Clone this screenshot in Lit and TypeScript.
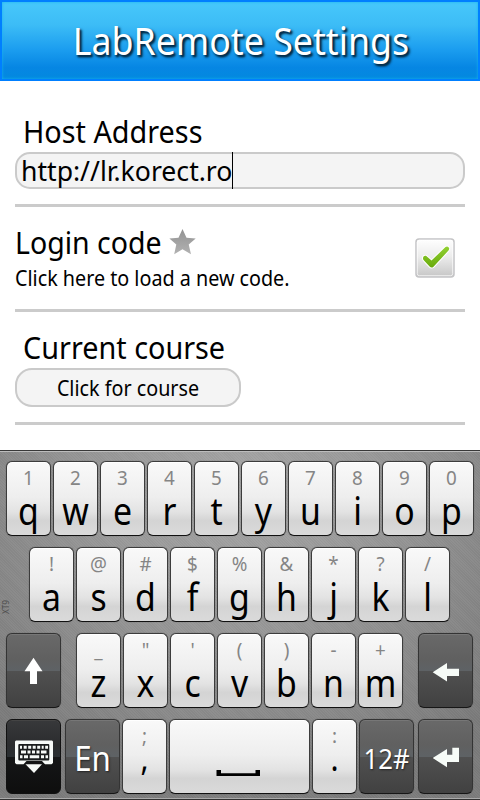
import { LitElement, html, css, svg, nothing } from "lit";
import { customElement, property } from "lit/decorators.js";

const icons: Record<string, unknown> = {
  shift: svg`<path fill="#fff" d="M27.5 24.7L36.5 38.3H31V51H24V38.3H18.5Z"/>`,
  del: svg`<path fill="#f7fcf8" d="M14.7 39.3L29 30V35.7H41V43H29V48.6Z"/>`,
  enter: svg`<path fill="#f7fcf8" d="M14.7 39L29 30V35.8H34.3V28.7H41V43H29V48.3Z"/>`,
  space: svg`<path fill="#000" d="M47.5 51H52V54.2H86.5V51H91V57H47.5Z"/>`,
  hide: svg`
    <path fill="#f7faf8" d="M10 21.5H46L47 22.5V44L45.5 45.3H39L36 42H20.5L17.5 45.3H10.5L9 44V22.5Z"/>
    <rect x="12.3" y="25" width="31" height="16.4" rx="1" fill="#1a1c1d"/>
    <path stroke="#f7faf8" stroke-width="3" d="M14 28.2h2M17.7 28.2h3M22.2 28.2h3M26.7 28.2h3M31.2 28.2h3M35.7 28.2h2M39.2 28.2h2.8M15 33h5M21.5 33h3M26 33h3M30.5 33h3M35 33h5.5M14 37.8h2.5M18 37.8h4M23.7 37.8h9.5M35 37.8h3M39.5 37.8h2.5"/>
    <path fill="#f7faf8" d="M19.5 45.3H36L28 54Z"/>`,
};

@customElement("key-cap")
export class KeyCap extends LitElement {
  @property() alt = "";
  @property() label = "";
  @property() icon = "";
  @property({ reflect: true }) kind = "light";

  static styles = css`
    :host {
      display: block; box-sizing: border-box; width: 45px; height: 75px; flex: none;
      border: 1px solid #3c3c3c; border-bottom-color: #111; border-radius: 6px;
      background: linear-gradient(#f9f9f9, #eeeeee 48%, #e3e3e3 68%, #d4d4d4 80%, #dadada);
      box-shadow: 0 0 1px rgba(0, 0, 0, 0.45), inset 0 1px 0 #fff;
      text-align: center; overflow: hidden;
    }
    :host([kind="dark"]), :host([kind="black"]) {
      width: 55px; border-color: #343434; border-bottom-color: #161616;
      background: linear-gradient(#696969, #606060 34%, #5e6265 50%, #505050 51%, #414141);
      box-shadow: 0 0 1px rgba(0, 0, 0, 0.4), inset 0 1px 0 #777;
    }
    :host([kind="black"]) {
      border-color: #111;
      background: linear-gradient(#38393b, #2b2c2e 34%, #2a2f32 50%, #151617 51%, #0e0e0e);
      box-shadow: inset 0 1px 0 #444;
    }
    :host([kind="space"]) { width: 141px; }
    .alt { font-size: 20px; line-height: 24px; height: 24px; margin-top: 4px; color: #858585; transform: scaleX(0.94); }
    .main { font-size: 38px; line-height: 44px; margin: -2px -6px 0; color: #000; transform: scaleX(0.89); }
    .point { font-size: 34px; margin-top: -12px; }
    .word { font-size: 34px; line-height: 76px; margin: 0 -6px; color: #fff; text-shadow: 1px 1px 2px #222; transform: scaleX(0.92); }
    .long { font-size: 28px; transform: scaleX(0.92); }
    svg { display: block; width: calc(100% + 2px); height: 75px; margin: -1px; }
  `;

  render() {
    if (this.icon) return html`<svg>${icons[this.icon]}</svg>`;
    if (this.kind === "dark")
      return html`<div class="word ${this.label.length > 2 ? "long" : ""}">${this.label}</div>`;
    const point = this.label === "," || this.label === ".";
    return html`${this.alt ? html`<div class="alt">${this.alt}</div>` : nothing}<div class="main ${point ? "point" : ""}">${this.label}</div>`;
  }
}

const letters = (main: string, alts: string) =>
  [...main].map((c, i) => html`<key-cap label=${c} alt=${alts[i]}></key-cap>`);

@customElement("app-root")
export class AppRoot extends LitElement {
  static styles = css`
    :host {
      display: flex; flex-direction: column; width: 480px; height: 800px; overflow: hidden;
      background: #fff; color: #000; font-family: "Noto Sans", "Open Sans", sans-serif; white-space: nowrap;
    }
    header {
      box-sizing: border-box; height: 81px; flex: none; border: 2px solid #007fff;
      background: linear-gradient(#47c8fb, #3cbcf6 30%, #1b9def 62%, #0686e3 85%, #0389df);
      box-shadow: inset 0 0 3px #18b5ee;
      text-align: center; color: #fff; font-size: 38px; line-height: 77px;
      text-shadow: 2px 2px 3px #022b48, 2px 2px 2px #063858;
    }
    .title { display: inline-block; transform: translateX(1px) scaleX(0.94); }
    section { box-sizing: border-box; flex: none; margin: 0 15px; border-bottom: 3px solid #cbcbcb; }
    .host { height: 126px; padding-top: 33px; }
    .login { height: 105px; padding-top: 18px; display: flex; justify-content: space-between; }
    .course { height: 113px; padding-top: 18px; }
    .label { height: 36px; font-size: 30px; line-height: 36px; display: flex; align-items: flex-start; }
    .indent { padding-left: 8px; }
    .fit { display: block; transform-origin: left; transform: scaleX(0.95); }
    .indent .fit { transform: scaleX(0.96); }
    .field {
      box-sizing: border-box; height: 37px; margin-top: 2px; padding-left: 4px;
      border: 2px solid #cacaca; border-radius: 15px; background: #f4f4f4;
      font-size: 27px; line-height: 34px; display: flex;
    }
    .url { width: 211px; }
    .url .fit { transform: scaleX(0.985); }
    .caret { width: 1px; height: 37px; margin-top: -2px; background: #000; }
    .sub { font-size: 21px; line-height: 24px; margin-top: 5px; }
    .sub .fit, .button .fit { transform: scaleX(0.94); }
    .star { width: 27px; height: 26px; margin: 4px 0 0 6px; }
    .name { width: 148px; }
    .check { width: 40px; height: 40px; margin: 13px 10px 0 0; }
    .button {
      box-sizing: border-box; width: 226px; height: 39px; margin-top: 2px;
      border: 2px solid #cacaca; border-radius: 17px; background: #f4f4f4;
      font-size: 21px; line-height: 36px; text-align: center;
    }
    .button .fit { transform-origin: center; }
    .board {
      flex: none; box-sizing: border-box; height: 350px; margin-top: 25px; padding: 10px 0 0 6px;
      border-top: 1px solid #383838; border-bottom: 1px solid #333;
      box-shadow: inset 0 1px 0 #bdbdbd, inset 0 -1px 0 #aaa;
      background:
        repeating-linear-gradient(45deg, rgba(255,255,255,0.025) 0 1px, rgba(0,0,0,0.025) 1px 2px),
        radial-gradient(ellipse 330px 330px at 50% 10%, #a5a5a5, #989898 45%, #7c7c7c);
      display: grid; grid-template-rows: repeat(4, 75px); row-gap: 11px;
    }
    .row { display: flex; gap: 2px; }
    .mode {
      width: 12px; height: 20px; margin: 50px 9px 0 -6px; flex: none;
      display: flex; justify-content: center; align-items: center;
      font-size: 9px; line-height: 12px; color: #4c4c4c;
    }
    .mode span { display: block; transform: rotate(-90deg) scaleX(0.92); }
    .letters { display: flex; gap: 2px; margin: 0 13px; }
    .gap { margin-left: 2px; }
    .row2 { padding-left: 0; }
    .row2 key-cap:nth-child(2) { margin-left: 6px; }
  `;

  render() {
    return html`
      <header><span class="title">LabRemote Settings</span></header>
      <section class="host">
        <div class="label indent"><span class="fit">Host Address</span></div>
        <div class="field"><span class="url"><span class="fit">http://lr.korect.ro</span></span><span class="caret"></span></div>
      </section>
      <section class="login">
        <div>
          <div class="label">
            <span class="name"><span class="fit">Login code</span></span>
            <svg class="star" viewBox="0 0 27 26">
              <defs><linearGradient id="s" x2="0" y2="1"><stop stop-color="#929292"/><stop offset="1" stop-color="#b2b2b2"/></linearGradient></defs>
              <path fill="url(#s)" d="M13.5 0L17.5 8.7L26.7 9.5L19.7 15.6L22 25.2L13.5 20.2L5.2 25.2L7.3 15.6L.4 9.5L9.5 8.7Z"/>
            </svg>
          </div>
          <div class="sub"><span class="fit">Click here to load a new code.</span></div>
        </div>
        <svg class="check" viewBox="0 0 40 40">
          <defs>
            <linearGradient id="b" x2="0" y2="1"><stop stop-color="#fff"/><stop offset=".45" stop-color="#ededed"/><stop offset="1" stop-color="#c6c6c6"/></linearGradient>
            <linearGradient id="c" x2="0" y2="1"><stop stop-color="#92d132"/><stop offset="1" stop-color="#68aa0b"/></linearGradient>
          </defs>
          <rect x="1" y="1" width="38" height="38" rx="3" fill="url(#b)" stroke="#c4c4c6" stroke-width="1.5"/>
          <rect x="2.3" y="2.3" width="35.4" height="35.4" rx="2" fill="none" stroke="#fff" stroke-opacity=".7"/>
          <path fill="url(#c)" stroke="#fff" stroke-width="2" paint-order="stroke" stroke-linejoin="round"
            d="M8 19.8Q8.5 17.3 11 17.8L16.5 22.6L30.5 9Q33 7.8 34.2 10.2Q34.3 11.7 32.8 13.3L18.5 28.7Q16.5 30.5 14.6 28.5L9 22.5Q7.8 21.2 8 19.8Z"/>
        </svg>
      </section>
      <section class="course">
        <div class="label indent"><span class="fit">Current course</span></div>
        <div class="button"><span class="fit">Click for course</span></div>
      </section>
      <div class="board">
        <div class="row">${letters("qwertyuiop", "1234567890")}</div>
        <div class="row row2"><div class="mode"><span>XT9</span></div>${letters("asdfghjkl", "!@#$%&*?/")}</div>
        <div class="row">
          <key-cap kind="dark" icon="shift"></key-cap>
          <div class="letters">${letters("zxcvbnm", "_\"'()-+")}</div>
          <key-cap kind="dark" icon="del"></key-cap>
        </div>
        <div class="row">
          <key-cap kind="black" icon="hide"></key-cap>
          <key-cap class="gap" kind="dark" label="En"></key-cap>
          <key-cap label="," alt=";"></key-cap>
          <key-cap kind="space" icon="space"></key-cap>
          <key-cap label="." alt=":"></key-cap>
          <key-cap kind="dark" label="12#"></key-cap>
          <key-cap class="gap" kind="dark" icon="enter"></key-cap>
        </div>
      </div>
    `;
  }
}
